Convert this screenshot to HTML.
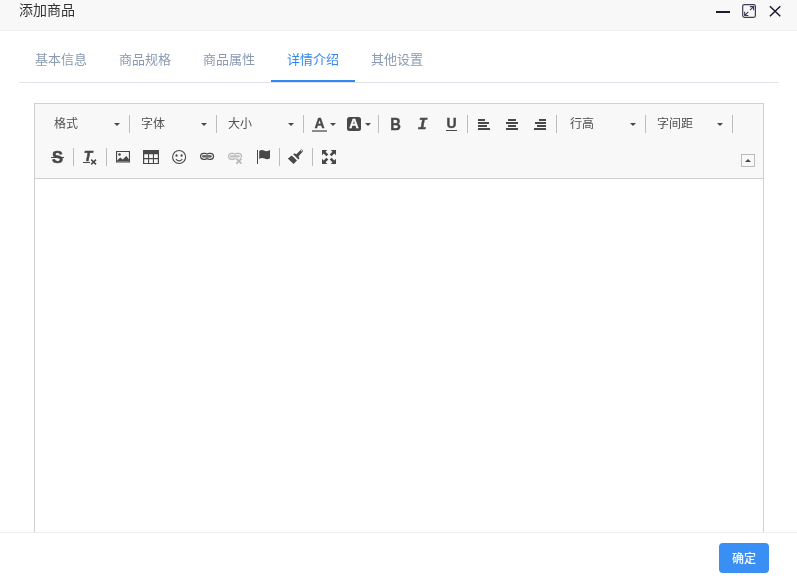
<!DOCTYPE html>
<html lang="zh-CN">
<head>
<meta charset="utf-8">
<title>添加商品</title>
<style>
*{box-sizing:border-box;margin:0;padding:0}
html,body{width:797px;height:579px;overflow:hidden;background:#fff}
body{will-change:transform;font-family:"Liberation Sans","Noto Sans CJK SC",sans-serif;color:#333;position:relative}
.abs{position:absolute}
#title{left:0;top:0;width:797px;height:31px;background:#f8f8f8;border-bottom:1px solid #eee}
#title .txt{left:19px;top:-1px;font-size:14px;line-height:22px;color:#333;white-space:nowrap}
#tabs{left:19px;top:31px;width:760px;height:52px;border-bottom:1px solid #dfe4ea}
.tab{top:18px;font-size:13px;line-height:22px;color:#8a9ab2;white-space:nowrap}
.tab.on{color:#3388f2}
#tabline{left:252px;top:49px;width:84px;height:2px;background:#3388f2}
#editor{left:34px;top:103px;width:730px;height:440px;border:1px solid #d1d1d1;background:#fff}
#tb{left:0;top:0;width:728px;height:75px;background:#f8f8f8;border-bottom:1px solid #d1d1d1}
.sep{width:1px;height:18px;background:#bcbcbc}
.ct{font-size:12px;line-height:26px;color:#505050;white-space:nowrap}
.arr{width:0;height:0;border-left:3px solid transparent;border-right:3px solid transparent;border-top:3px solid #484848}
.lt{-webkit-text-stroke:0.35px currentColor;height:18px;font:bold 15px/18px 'Liberation Sans',sans-serif;color:#484848;text-align:center}
.ic{width:16px;height:16px}
.ic svg{display:block;width:16px;height:16px}
#foot{left:0;top:532px;width:797px;height:47px;background:#fff;border-top:1px solid #eee}
#ok{left:719px;top:543px;width:50px;height:30px;background:#3a8ff5;border-radius:4px;color:#fff;font-size:12px;font-weight:500;line-height:30px;padding-top:1px;text-align:center}
</style>
</head>
<body>
<div id="title" class="abs"><div class="txt abs">添加商品</div>
<svg class="abs" style="left:700px;top:0" width="97" height="30" viewBox="0 0 97 30">
<rect x="16" y="11" width="14" height="2" fill="#1c1c33"/>
<rect x="42.7" y="4.6" width="12.7" height="12.7" rx="1.8" fill="none" stroke="#3d3d55" stroke-width="1.2"/>
<path d="M44.9 15.3 L48.3 11.9 M50 10.2 L53.4 6.8 M49.9 6.6 H53.6 V10.3 M44.7 11.8 V15.5 H48.4" fill="none" stroke="#3d3d55" stroke-width="1.15"/>
<path d="M69.9 6.2 L80.3 16.2 M80.3 6.2 L69.9 16.2" fill="none" stroke="#1c1c33" stroke-width="1.5"/>
</svg>
</div>

<div id="tabs" class="abs">
<div class="tab abs" style="left:16px">基本信息</div>
<div class="tab abs" style="left:100px">商品规格</div>
<div class="tab abs" style="left:184px">商品属性</div>
<div class="tab on abs" style="left:268px">详情介绍</div>
<div class="tab abs" style="left:352px">其他设置</div>
<div id="tabline" class="abs"></div>
</div>

<div id="editor" class="abs">
<div id="tb" class="abs">
<!-- row 1 combos -->
<div class="ct abs" style="left:19px;top:7px">格式</div><div class="arr abs" style="left:79px;top:19px"></div><div class="sep abs" style="left:94px;top:11px"></div>
<div class="ct abs" style="left:106px;top:7px">字体</div><div class="arr abs" style="left:166px;top:19px"></div><div class="sep abs" style="left:181px;top:11px"></div>
<div class="ct abs" style="left:193px;top:7px">大小</div><div class="arr abs" style="left:253px;top:19px"></div><div class="sep abs" style="left:268px;top:11px"></div>
<!-- colours -->
<div class="lt abs" style="left:276px;top:10px;width:17px;font-size:14px">A</div>
<div class="abs" style="left:277px;top:26px;width:15px;height:2px;background:#8a8a8a"></div>
<div class="arr abs" style="left:295px;top:19px"></div>
<div class="abs" style="left:312px;top:13px;width:14px;height:14px;border-radius:2.5px;background:#484848"></div>
<div class="lt abs" style="left:311px;top:11px;width:16px;font-size:13px;color:#fff">A</div>
<div class="arr abs" style="left:330px;top:19px"></div>
<div class="sep abs" style="left:343px;top:11px"></div>
<!-- B I U -->
<div class="lt abs" style="left:352px;top:12px;width:17px;font-size:16px;transform:scaleX(.92)">B</div>
<div class="lt abs" style="left:379px;top:12px;width:17px;font-size:16px;font-family:'Liberation Mono',monospace;font-style:italic">I</div>
<div class="lt abs" style="left:408px;top:10px;width:17px;font-size:14px">U</div>
<div class="abs" style="left:411px;top:25.5px;width:11px;height:1.4px;background:#484848"></div>
<div class="sep abs" style="left:432px;top:11px"></div>
<!-- align -->
<div class="ic abs" style="left:441px;top:12px"><svg viewBox="0 0 16 16"><path d="M2 3h7v2H2zM2 6h11v2H2zM2 9h9v2H2zM2 12h12v2H2z" fill="#484848"/></svg></div>
<div class="ic abs" style="left:469px;top:12px"><svg viewBox="0 0 16 16"><path d="M4 3h8v2H4zM2 6h12v2H2zM4 9h8v2H4zM2 12h12v2H2z" fill="#484848"/></svg></div>
<div class="ic abs" style="left:497px;top:12px"><svg viewBox="0 0 16 16"><path d="M7 3h7v2H7zM3 6h11v2H3zM5 9h9v2H5zM2 12h12v2H2z" fill="#484848"/></svg></div>
<div class="sep abs" style="left:521px;top:11px"></div>
<!-- combos 2 -->
<div class="ct abs" style="left:535px;top:7px">行高</div><div class="arr abs" style="left:595px;top:19px"></div><div class="sep abs" style="left:610px;top:11px"></div>
<div class="ct abs" style="left:622px;top:7px">字间距</div><div class="arr abs" style="left:682px;top:19px"></div><div class="sep abs" style="left:697px;top:11px"></div>

<!-- row 2 -->
<div class="lt abs" style="left:14px;top:44px;width:17px;font-size:16.5px;-webkit-text-stroke-width:.55px">S</div>
<div class="abs" style="left:16px;top:52.5px;width:13px;height:1.1px;background:#484848"></div>
<div class="sep abs" style="left:38px;top:44px"></div>
<div class="lt abs" style="left:46px;top:43px;width:14px;font-size:14px;font-style:italic;-webkit-text-stroke-width:.5px">T</div>
<div class="abs" style="left:48px;top:58px;width:6.5px;height:1px;background:#484848"></div>
<svg class="abs" style="left:55px;top:54px" width="8" height="8" viewBox="0 0 8 8"><path d="M1.2 1.6L6 6.4M6 1.6L1.2 6.4" stroke="#484848" stroke-width="1.5" fill="none"/></svg>
<div class="sep abs" style="left:71px;top:44px"></div>
<!-- image -->
<div class="ic abs" style="left:80px;top:45px"><svg viewBox="0 0 16 16"><path d="M1 2h14v11.5H1z M2.1 3.1v9.3h11.8V3.1z" fill="#484848" fill-rule="evenodd"/><path d="M2.1 12.5 V11.6 L5.2 8.6 L7.8 10.4 L11.2 6.9 L13.9 10.2 V12.5 Z" fill="#484848"/><circle cx="4.5" cy="5.5" r="1.35" fill="#484848"/></svg></div>
<!-- table -->
<div class="ic abs" style="left:108px;top:45px"><svg viewBox="0 0 16 16"><path d="M0 1h16v14H0z M1.2 5.2v3.8h3.8V5.2z M6.1 5.2v3.8h3.8V5.2z M11 5.2v3.8h3.8V5.2z M1.2 10.2v3.8h3.8v-3.8z M6.1 10.2v3.8h3.8v-3.8z M11 10.2v3.8h3.8v-3.8z" fill="#484848" fill-rule="evenodd"/></svg></div>
<!-- smiley -->
<div class="ic abs" style="left:136px;top:45px"><svg viewBox="0 0 16 16"><circle cx="8.1" cy="8" r="6.5" fill="none" stroke="#484848" stroke-width="1.1"/><ellipse cx="5.5" cy="6.5" rx="1.05" ry="1.3" fill="#484848"/><ellipse cx="10.6" cy="6.5" rx="1.05" ry="1.3" fill="#484848"/><path d="M4.9 10.2 Q8.1 13.6 11.3 10.2" fill="none" stroke="#484848" stroke-width="1.1"/></svg></div>
<!-- link -->
<div class="ic abs" style="left:164px;top:45px"><svg viewBox="0 0 16 16"><rect x="1" y="3.7" width="8.2" height="7.2" rx="3.6" fill="#484848"/><rect x="6.9" y="3.7" width="8.2" height="7.2" rx="3.6" fill="#484848"/><rect x="2.2" y="4.9" width="6.2" height="4.8" rx="2.4" fill="#f8f8f8"/><rect x="7.7" y="4.9" width="6.2" height="4.8" rx="2.4" fill="#f8f8f8"/><rect x="3" y="6.2" width="9.8" height="2.2" rx="1.1" fill="#484848"/><rect x="4.2" y="7.1" width="7.4" height="0.4" fill="#9a9a9a"/></svg></div>
<!-- unlink -->
<div class="ic abs" style="left:192px;top:45px;opacity:.36"><svg viewBox="0 0 16 16"><rect x="1" y="3.7" width="8.2" height="7.2" rx="3.6" fill="#484848"/><rect x="6.9" y="3.7" width="8.2" height="7.2" rx="3.6" fill="#484848"/><rect x="2.2" y="4.9" width="6.2" height="4.8" rx="2.4" fill="#f8f8f8"/><rect x="7.7" y="4.9" width="6.2" height="4.8" rx="2.4" fill="#f8f8f8"/><rect x="3" y="6.2" width="9.8" height="2.2" rx="1.1" fill="#484848"/><rect x="4.2" y="7.1" width="7.4" height="0.4" fill="#9a9a9a"/><rect x="8.6" y="8.8" width="7" height="7" fill="#f8f8f8"/><path d="M9.4 9.6l5 5M14.4 9.6l-5 5" stroke="#484848" stroke-width="1.7"/></svg></div>
<!-- anchor flag -->
<div class="ic abs" style="left:220px;top:45px"><svg viewBox="0 0 16 16"><rect x="2" y="1" width="1" height="14" fill="#484848"/><path d="M4.2 2 C6 0.6 8 0.9 9.5 1.7 C11.5 2.6 13.5 2 15 1 V9.3 C13.5 10.4 11.5 10.6 9.5 9.6 C8 8.8 6 8.6 4.2 10 Z" fill="#484848"/></svg></div>
<div class="sep abs" style="left:244px;top:44px"></div>
<!-- brush -->
<div class="ic abs" style="left:253px;top:45px"><svg viewBox="0 0 16 16"><path d="M-0.1 9.6 L3.7 6.4 L9 11.4 L5.6 14.9 Z" fill="#484848"/><path d="M5.2 5.2 L6.2 4.2 L8.4 5.2 L12.6 0.9 C13.6 -0.1 15.6 1.5 14.6 2.8 L10.6 7.2 L11.4 9.4 L10.4 10.4 Z" fill="#484848"/><circle cx="13.6" cy="1.8" r="0.7" fill="#f8f8f8"/></svg></div>
<div class="sep abs" style="left:277px;top:44px"></div>
<!-- maximize -->
<div class="ic abs" style="left:286px;top:45px"><svg viewBox="0 0 16 16"><path d="M1 1h5.3L4.6 2.7 7.3 5.4 5.4 7.3 2.7 4.6 1 6.3z M15 1v5.3l-1.7-1.7L10.600 7.300 8.700 5.400l2.700-2.700L9.700 1z M1 15V9.700l1.700 1.700L5.400 8.700 7.300 10.600l-2.700 2.700L6.300 15z M15 15H9.700l1.700-1.700L8.700 10.600 10.600 8.700l2.700 2.700L15 9.700z" fill="#484848"/></svg></div>
<!-- collapser -->
<div class="abs" style="left:706px;top:50px;width:14px;height:13px;border:1px solid #bcbcbc"></div>
<div class="abs" style="left:710px;top:52px;width:0;height:0;border:3px solid transparent;border-bottom-color:#484848"></div>
</div>
</div>

<div id="foot" class="abs"></div>
<div id="ok" class="abs">确定</div>
</body>
</html>
